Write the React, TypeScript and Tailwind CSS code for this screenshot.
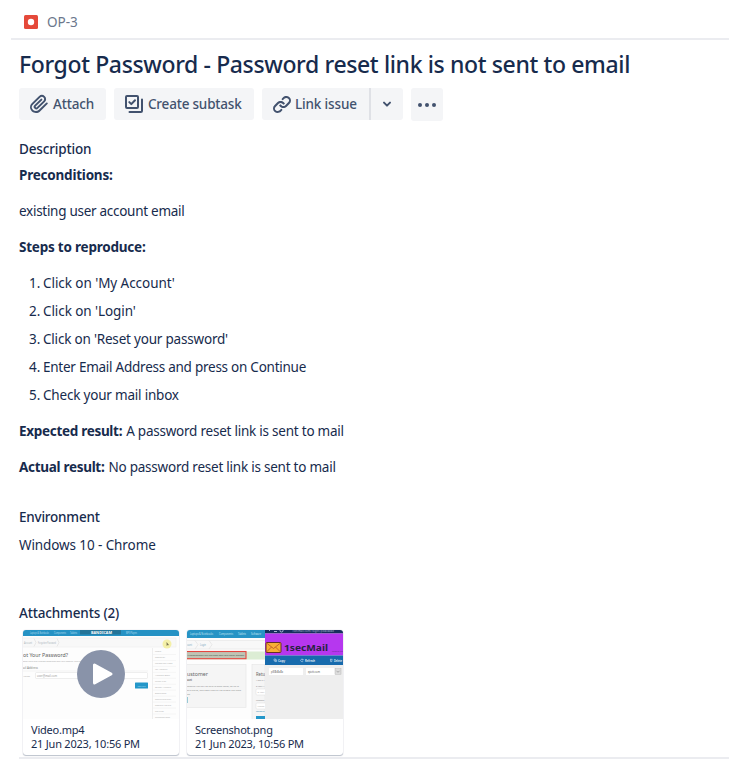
import type { ReactNode } from "react";

const steps = [
  { text: "Click on 'My Account'", tracking: "tracking-[-0.06px]" },
  { text: "Click on 'Login'", tracking: "tracking-[-0.08px]" },
  { text: "Click on 'Reset your password'", tracking: "tracking-[-0.2px]" },
  { text: "Enter Email Address and press on Continue", tracking: "tracking-[-0.25px]" },
  { text: "Check your mail inbox", tracking: "tracking-[-0.2px]" },
];

function AttachIcon() {
  return (
    <svg width="24" height="24" viewBox="0 0 24 24" fill="currentColor">
      <path d="M11.643 17.965c-1.53 1.495-4.016 1.496-5.542.004a3.773 3.773 0 0 1 .002-5.412l7.147-6.985a2.316 2.316 0 0 1 3.22-.004c.893.872.891 2.282.003 3.15l-6.703 6.55a.653.653 0 0 1-.914-.008.62.62 0 0 1 0-.902l6.229-6.087a.941.941 0 0 0 0-1.353.995.995 0 0 0-1.384 0l-6.23 6.087a2.502 2.502 0 0 0 0 3.607 2.643 2.643 0 0 0 3.683.009l6.703-6.55a4.074 4.074 0 0 0-.003-5.859 4.306 4.306 0 0 0-5.986.005l-7.147 6.985a5.655 5.655 0 0 0-.002 8.118c2.323 2.27 6.079 2.27 8.308.095l7.483-7.313a.941.941 0 0 0 0-1.353.995.995 0 0 0-1.384 0l-7.483 7.216z" />
    </svg>
  );
}

function SubtaskIcon() {
  return (
    <svg width="24" height="24" viewBox="0 0 24 24" fill="none" stroke="currentColor" strokeWidth="2">
      <rect x="4" y="4" width="12" height="12" rx="1" />
      <path d="m7.3 10.1 2 2 3.7-3.9" strokeLinecap="round" strokeLinejoin="round" />
      <path d="M20 7.5V19a1 1 0 0 1-1 1H7.5" strokeLinecap="round" />
    </svg>
  );
}

function LinkIcon() {
  return (
    <svg width="24" height="24" viewBox="0 0 24 24" fill="currentColor">
      <path d="M12.856 5.457l-.937.92a1.002 1.002 0 0 0 0 1.437 1.047 1.047 0 0 0 1.463 0l.984-.966c.967-.95 2.542-1.135 3.602-.288a2.54 2.54 0 0 1 .203 3.81l-2.903 2.852a2.646 2.646 0 0 1-3.696 0l-1.11-1.09L9 13.57l1.108 1.089c1.822 1.788 4.802 1.788 6.622 0l2.905-2.852a4.558 4.558 0 0 0-.357-6.82c-1.893-1.517-4.695-1.226-6.422.47" />
      <path d="M11.144 19.543l.937-.92a1.002 1.002 0 0 0 0-1.437 1.047 1.047 0 0 0-1.462 0l-.985.966c-.967.95-2.542 1.135-3.602.288a2.54 2.54 0 0 1-.203-3.81l2.903-2.852a2.646 2.646 0 0 1 3.696 0l1.11 1.09L15 11.43l-1.108-1.089c-1.822-1.788-4.802-1.788-6.622 0l-2.905 2.852a4.558 4.558 0 0 0 .357 6.82c1.893 1.517 4.695 1.226 6.422-.47" />
    </svg>
  );
}

function VideoThumb() {
  const side = ["Login", "Register", "Forgotten Pass", "My Account", "Address Book", "Wish List", "Order History", "Downloads", "Recurring pay", "Reward Points", "Returns", "Transactions"];
  return (
    <svg className="block h-[89px] w-[156px]" viewBox="0 0 156 89" fontFamily="Noto Sans, sans-serif">
      <rect width="156" height="89" fill="#fdfdfd" />
      <rect width="156" height="6" fill="#2592c4" />
      <rect x="57" y="0" width="41" height="4.5" fill="#25617c" opacity=".6" />
      <g fill="#b4ddee" fontSize="2.6">
        <text x="7" y="3.6" textLength="19" lengthAdjust="spacingAndGlyphs">Laptops &amp; Notebooks</text>
        <text x="31" y="3.6" textLength="12" lengthAdjust="spacingAndGlyphs">Components</text>
        <text x="47" y="3.6" textLength="7" lengthAdjust="spacingAndGlyphs">Tablets</text>
        <text x="103" y="3.6" textLength="11" lengthAdjust="spacingAndGlyphs">MP3 Players</text>
      </g>
      <text x="68" y="4" fill="#fff" fontSize="4.2" fontWeight="700" textLength="21" lengthAdjust="spacingAndGlyphs">BANDICAM</text>
      <rect x="-1" y="8" width="154" height="9" fill="#f8f8f8" stroke="#eee" strokeWidth=".6" />
      <path d="m11 8.5 2 4-2 4M34 8.5l2 4-2 4" fill="none" stroke="#ddd" strokeWidth=".6" />
      <g fill="#a9b4ba" fontSize="2.6">
        <text x="1" y="13.5" textLength="8" lengthAdjust="spacingAndGlyphs">Account</text>
        <text x="15" y="13.5" textLength="18" lengthAdjust="spacingAndGlyphs">Forgotten Password</text>
      </g>
      <circle cx="144" cy="14" r="4.5" fill="#f4f0a8" />
      <path d="m143.5 12 .2 4 1-1 1.5.2z" fill="#77714e" />
      <text x="0" y="26.6" fill="#5c5c5c" fontSize="5.6" textLength="45" lengthAdjust="spacingAndGlyphs">ot Your Password?</text>
      <text x="0" y="31.6" fill="#a8a8a8" fontSize="2.3" textLength="90" lengthAdjust="spacingAndGlyphs">Enter the e-mail address associated with your account. Click submit to have a password reset link</text>
      <text x="0" y="38.6" fill="#848484" fontSize="3.5" textLength="15" lengthAdjust="spacingAndGlyphs">ail Address</text>
      <path d="M0 41h125" stroke="#eee" strokeWidth=".6" />
      <text x="0" y="46.5" fill="#aaa" fontSize="2.5" textLength="7" lengthAdjust="spacingAndGlyphs">Address</text>
      <rect x="12.5" y="42.5" width="112" height="6" rx="1" fill="#fff" stroke="#e2e2e2" strokeWidth=".6" />
      <text x="14" y="46.5" fill="#999" fontSize="2.6" textLength="20" lengthAdjust="spacingAndGlyphs">user@mail.com</text>
      <rect x="112" y="52.5" width="13" height="6" rx=".5" fill="#2497c9" />
      <text x="114.5" y="56.5" fill="#a5dbef" fontSize="2.4" textLength="8" lengthAdjust="spacingAndGlyphs">Continue</text>
      <path d="M129.5 18v71" stroke="#e6e6e6" strokeWidth=".7" />
      {side.map((label, i) => (
        <g key={label}>
          <text x="132" y={22.3 + i * 5.95} fill="#b4b4b4" fontSize="2.4" textLength={label.length * 1.25} lengthAdjust="spacingAndGlyphs">{label}</text>
          <path d={`M130 ${24.5 + i * 5.95}h23`} stroke="#ececec" strokeWidth=".5" />
        </g>
      ))}
    </svg>
  );
}

function ScreenshotThumb() {
  return (
    <svg className="block h-[89px] w-[156px]" viewBox="0 0 156 89" fontFamily="Noto Sans, sans-serif">
      <rect width="156" height="89" fill="#fdfdfd" />
      <rect width="78" height="8" fill="#2794c5" />
      <g fill="#c5e6f3" fontSize="2.6">
        <text x="3" y="4.7" textLength="23" lengthAdjust="spacingAndGlyphs">Laptops &amp; Notebooks</text>
        <text x="32" y="4.7" textLength="14" lengthAdjust="spacingAndGlyphs">Components</text>
        <text x="51" y="4.7" textLength="8" lengthAdjust="spacingAndGlyphs">Tablets</text>
        <text x="64" y="4.7" textLength="10" lengthAdjust="spacingAndGlyphs">Software</text>
      </g>
      <rect x="-1" y="10.5" width="80" height="8.5" fill="#f8f8f8" stroke="#e5e5e5" strokeWidth=".6" />
      <path d="m8 10.5 3 4.2L8 19M22 10.5l3 4.2-3 4.3" fill="none" stroke="#ddd" strokeWidth=".6" />
      <g fill="#78a8bf" fontSize="2.6">
        <text x="0" y="15.6" textLength="5" lengthAdjust="spacingAndGlyphs">ount</text>
        <text x="13" y="15.6" textLength="6" lengthAdjust="spacingAndGlyphs">Login</text>
      </g>
      <rect y="21.5" width="78" height="8" fill="#dcedd4" />
      <rect x="-1" y="21.5" width="60" height="7.2" fill="#bfc4b4" stroke="#e5463f" strokeWidth="1.1" />
      <text x="0" y="26.3" fill="#42534a" fontSize="2.5" textLength="57" lengthAdjust="spacingAndGlyphs">l a confirmation link has been sent your email address</text>
      <rect x="-1" y="34.5" width="60" height="43" fill="#f5f5f5" stroke="#e4e4e4" strokeWidth=".6" />
      <text x="0" y="46" fill="#666" fontSize="5.4" textLength="21" lengthAdjust="spacingAndGlyphs">ustomer</text>
      <text x="0" y="51" fill="#777" fontSize="2.5" fontWeight="700" textLength="5" lengthAdjust="spacingAndGlyphs">ount</text>
      <g fill="#8a8a8a" fontSize="2.4">
        <text x="0" y="57" textLength="52" lengthAdjust="spacingAndGlyphs">account you will be able to shop faster, be up to</text>
        <text x="0" y="61" textLength="54" lengthAdjust="spacingAndGlyphs">er's status, and keep track of the orders you have</text>
        <text x="0" y="65">de.</text>
      </g>
      <path d="M.4 67v6" stroke="#74b9c8" strokeWidth=".8" />
      <rect x="65" y="34.5" width="13" height="60" fill="#f5f5f5" stroke="#e4e4e4" strokeWidth=".6" />
      <text x="69" y="46" fill="#666" fontSize="5.4" textLength="9" lengthAdjust="spacingAndGlyphs">Retu</text>
      <g fill="#8a8a8a" fontSize="2.4">
        <text x="69" y="50.8" textLength="8.5" lengthAdjust="spacingAndGlyphs">I am a r</text>
        <text x="69" y="57" textLength="8.5" lengthAdjust="spacingAndGlyphs">E-Mail A</text>
        <text x="69" y="71" textLength="8.5" lengthAdjust="spacingAndGlyphs">Passwor</text>
        <text x="69" y="82" fill="#2786b1" textLength="8.5" lengthAdjust="spacingAndGlyphs">Forgotte</text>
      </g>
      <rect x="69" y="59" width="15" height="6" rx="1" fill="#fff" stroke="#ddd" strokeWidth=".5" />
      <rect x="69" y="73" width="15" height="6" rx="1" fill="#fff" stroke="#ddd" strokeWidth=".5" />
      <g fill="#b4b4b4" fontSize="2.3">
        <text x="70.5" y="62.8" textLength="7" lengthAdjust="spacingAndGlyphs">E-Mail</text>
        <text x="70.5" y="76.8" textLength="7" lengthAdjust="spacingAndGlyphs">Passw</text>
      </g>
      <rect x="69" y="86" width="12" height="3" fill="#2497c9" />
      <rect x="78" width="78" height="89" fill="#eee" />
      <rect x="78" width="78" height="3.5" fill="#172f5e" />
      <g stroke="#cdd9ef" strokeWidth=".8" fill="none">
        <path d="m83 1-1-1m5 1.5h3" />
        <circle cx="94.5" cy=".5" r="1.5" />
      </g>
      <text x="105" y="2" fill="#a9b6d2" fontSize="2.6" textLength="42" lengthAdjust="spacingAndGlyphs">1secmail.com/?login=p3l8c8x8x</text>
      <rect x="78" y="3.5" width="78" height="22" fill="#b637ef" />
      <rect x="79" y="12.5" width="15" height="10" rx="1" fill="#f8af34" stroke="#623225" />
      <path d="m79.5 13 7 5.5 7-5.5m-14 9 5-5m9 5-5-5" fill="none" stroke="#b6522b" strokeWidth=".8" />
      <text x="97" y="21" fill="#282441" fontSize="9.5" fontWeight="700" textLength="44" lengthAdjust="spacingAndGlyphs">1secMail</text>
      <text x="145" y="21.8" fill="#662893" fontSize="2.4" textLength="11" lengthAdjust="spacingAndGlyphs">Create an</text>
      <rect x="78" y="25.5" width="78" height="9.5" fill="#176bad" />
      <g fill="none" stroke="#e3eef8" strokeWidth=".5">
        <path d="M87 29h1.7v1.7H87zm.9 1.7v.9h1.7v-1.7h-.9" />
        <path d="M116 29.6a1.3 1.3 0 1 0 .2 1.3m0-1.8v.9h-.9" />
        <path d="M143 29.3h2.4m-2 .1.2 2.2h1.2l.2-2.2" />
      </g>
      <g fill="#f0f6fc" fontSize="3.3" fontWeight="600">
        <text x="91" y="31.5" textLength="7" lengthAdjust="spacingAndGlyphs">Copy</text>
        <text x="118" y="31.5" textLength="10" lengthAdjust="spacingAndGlyphs">Refresh</text>
        <text x="147" y="31.5" textLength="8" lengthAdjust="spacingAndGlyphs">Delete</text>
      </g>
      <rect x="82" y="38" width="34" height="7" rx=".6" fill="#fff" />
      <rect x="119" y="38" width="35" height="7" rx=".6" fill="#fff" />
      <rect x="148" y="38.5" width="6" height="6" fill="#ddd" stroke="#aaa" strokeWidth=".4" />
      <path d="m149.5 40.8 1.5 1.5 1.5-1.5" fill="none" stroke="#777" strokeWidth=".5" />
      <g fill="#555" fontSize="2.6">
        <text x="84" y="42.5" textLength="12" lengthAdjust="spacingAndGlyphs">p3l8c8x8x</text>
        <text x="121" y="42.5" textLength="12" lengthAdjust="spacingAndGlyphs">qiott.com</text>
      </g>
    </svg>
  );
}

function Attachment({ name, children }: { name: string; children: ReactNode }) {
  return (
    <div className="relative h-[125px] w-[156px] overflow-hidden rounded-[3px] bg-white shadow-[0_1px_1px_rgba(9,30,66,0.25),0_0_1px_rgba(9,30,66,0.31)]">
      {children}
      <div className="pl-2 pt-1 text-[11px] leading-[14px] tracking-[-0.22px]">
        <div>{name}</div>
        <div>21 Jun 2023, 10:56 PM</div>
      </div>
    </div>
  );
}

export default function App() {
  return (
    <div className="h-[761px] w-[729px] overflow-hidden bg-white font-['Noto_Sans',sans-serif] text-[13.5px] leading-5 text-[#172b4d]">
      <header className="ml-[11px] flex h-10 items-center border-b-2 border-[#ebecf0] pl-[13px] pt-[6px] text-[#6b778c]">
        <svg width="14" height="14" viewBox="0 0 14 14">
          <rect width="14" height="14" rx="1.5" fill="#e5493a" />
          <circle cx="7" cy="7" r="3.2" fill="#fff" />
        </svg>
        <span className="ml-[9px]">OP-3</span>
      </header>
      <main className="pl-[19px]">
        <h1 className="mt-2 h-8 whitespace-nowrap text-[23px] font-medium leading-8 tracking-[-0.37px]">
          Forgot Password - Password reset link is not sent to email
        </h1>
        <div className="mt-2 flex gap-2 whitespace-nowrap font-medium text-[#42526e]">
          <button className="flex h-8 w-[87px] items-center rounded-[3px] bg-[#f4f5f7] pl-2">
            <AttachIcon />
            <span className="ml-[2px] tracking-[-0.15px]">Attach</span>
          </button>
          <button className="flex h-8 w-[140px] items-center rounded-[3px] bg-[#f4f5f7] pl-2">
            <SubtaskIcon />
            <span className="ml-[2px] tracking-[-0.2px]">Create subtask</span>
          </button>
          <div className="flex h-8 w-[141px] overflow-hidden rounded-[3px] bg-[#f4f5f7]">
            <button className="flex w-[107px] items-center pl-2">
              <LinkIcon />
              <span className="ml-[1px] tracking-[-0.15px]">Link issue</span>
            </button>
            <button className="flex flex-1 items-center justify-center border-l-2 border-[#dfe1e6]">
              <svg width="10" height="8" viewBox="0 0 10 8" fill="none" stroke="currentColor" strokeWidth="2" strokeLinecap="round" strokeLinejoin="round">
                <path d="m2 2.6 3 3 3-3" />
              </svg>
            </button>
          </div>
          <button className="flex h-[33px] w-8 items-center justify-center rounded-[3px] bg-[#f4f5f7]">
            <svg width="18" height="4" viewBox="0 0 18 4" fill="currentColor">
              <circle cx="2" cy="2" r="2" />
              <circle cx="9" cy="2" r="2" />
              <circle cx="16" cy="2" r="2" />
            </svg>
          </button>
        </div>
        <h2 className="mt-[18px] font-medium tracking-[-0.15px]">Description</h2>
        <p className="mt-[6px] font-bold tracking-[-0.22px]">Preconditions:</p>
        <p className="mt-4 tracking-[-0.28px]">existing user account email</p>
        <p className="mt-4 font-bold tracking-[-0.22px]">Steps to reproduce:</p>
        <ol className="mt-4 flex flex-col gap-2 pl-[10px]">
          {steps.map((step, i) => (
            <li key={step.text} className="flex">
              <span className="w-[14px]">{i + 1}.</span>
              <span className={step.tracking}>{step.text}</span>
            </li>
          ))}
        </ol>
        <p className="mt-4 flex gap-1 tracking-[-0.23px]">
          <b className="tracking-[-0.3px]">Expected result:</b>
          <span>A password reset link is sent to mail</span>
        </p>
        <p className="mt-4 flex gap-1 tracking-[-0.23px]">
          <b className="tracking-[-0.3px]">Actual result:</b>
          <span>No password reset link is sent to mail</span>
        </p>
        <h2 className="mt-[30px] font-medium tracking-[-0.22px]">Environment</h2>
        <p className="mt-2 tracking-[-0.1px]">Windows 10 - Chrome</p>
        <h2 className="mt-12 font-medium tracking-[-0.15px]">Attachments (2)</h2>
        <div className="mt-[7px] flex gap-2 pl-1">
          <Attachment name="Video.mp4">
            <VideoThumb />
            <div className="absolute left-[54px] top-[20px] flex size-12 items-center justify-center rounded-full bg-[#8993a9]">
              <svg width="48" height="48" viewBox="0 0 48 48">
                <path d="M17.5 15v18l16.5-9z" fill="#fff" stroke="#fff" strokeWidth="3" strokeLinejoin="round" />
              </svg>
            </div>
          </Attachment>
          <Attachment name="Screenshot.png">
            <ScreenshotThumb />
          </Attachment>
        </div>
        <div className="mt-[2px] h-[2px] bg-[#ebecf0]" />
      </main>
    </div>
  );
}
